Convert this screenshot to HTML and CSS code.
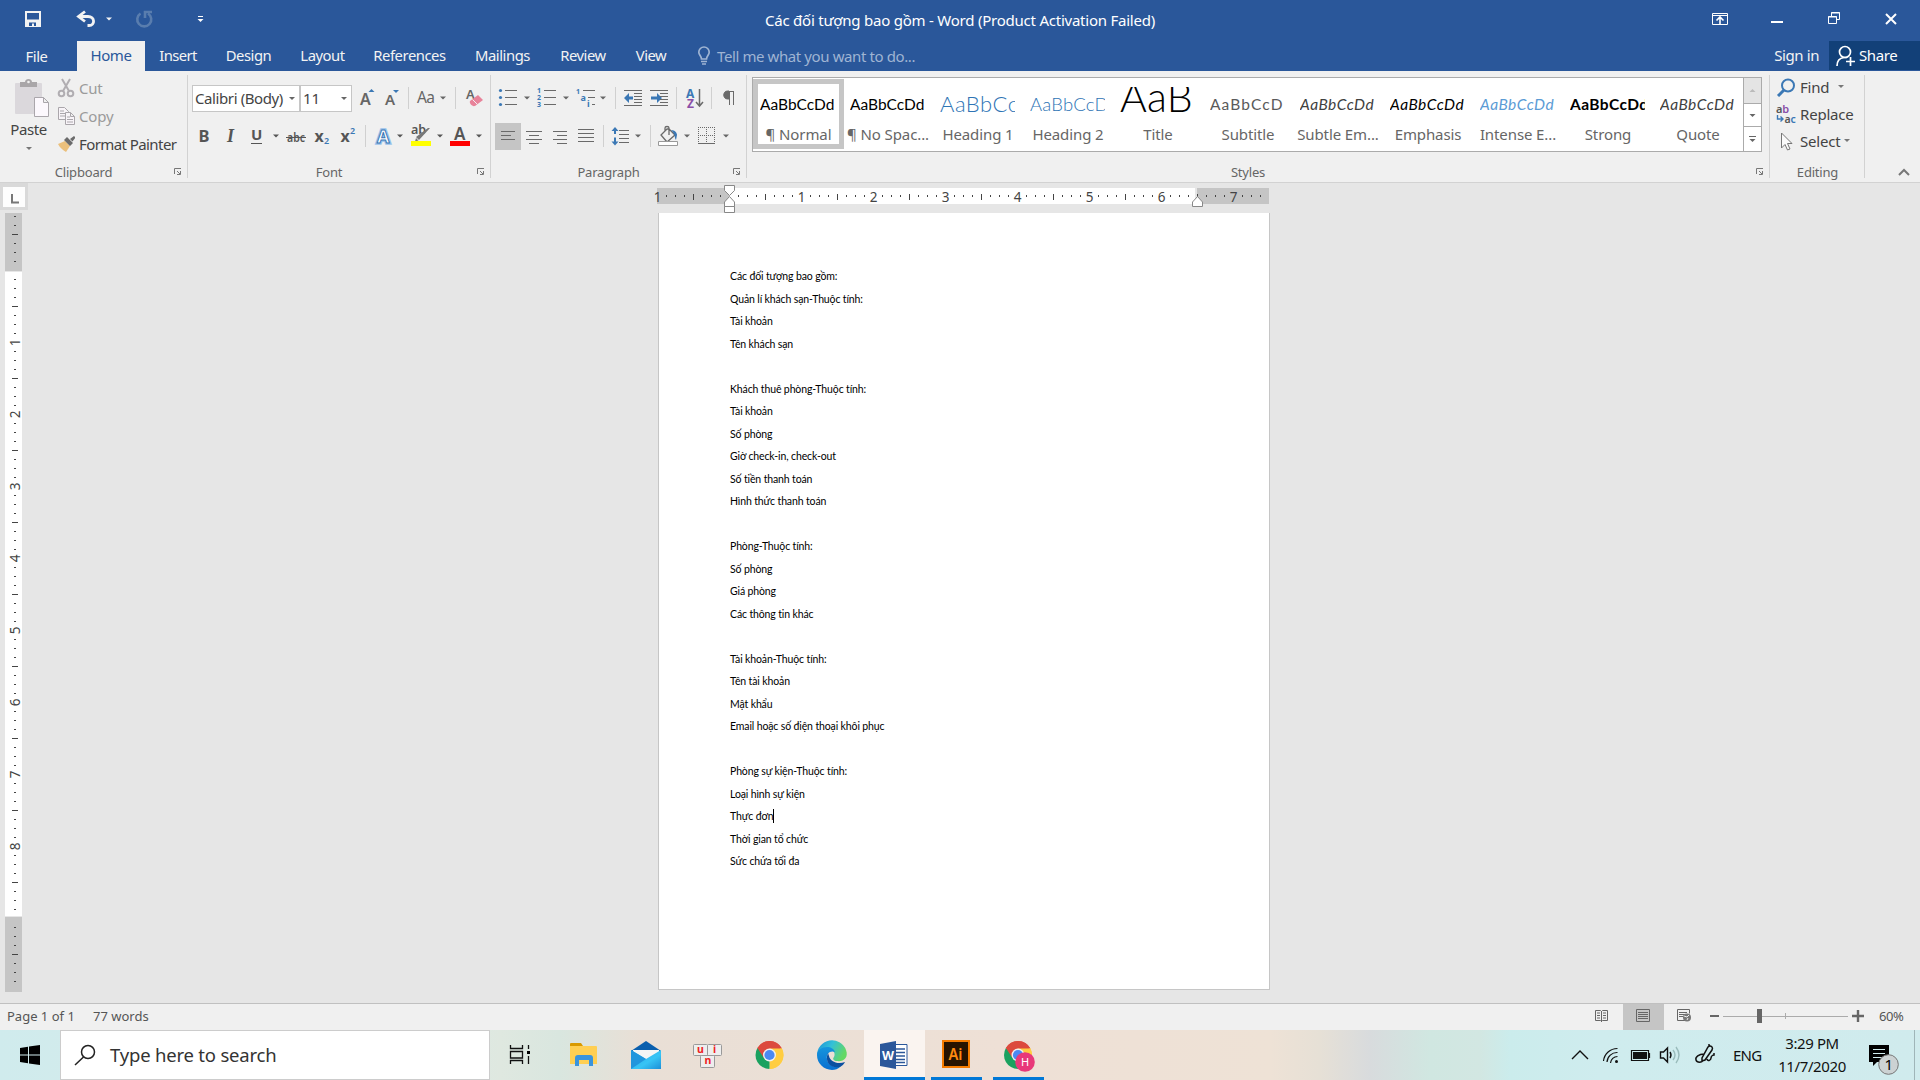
FILE: index.html
```html
<!DOCTYPE html>
<html lang="en">
<head>
<meta charset="utf-8">
<title>Các đối tượng bao gồm - Word</title>
<link rel="stylesheet" href="styles.css">
</head>
<body>
<svg class="defs" width="0" height="0" aria-hidden="true">
  <defs>
    <path id="caret" d="M0 0h6l-3 3z"/>
    <g id="launcher" fill="none" stroke="#777"><path d="M.5 6V.5H7"/><path d="M3 3l3 3M6.5 3v3.5H3"/></g>
    <pattern id="hticks" x="729" y="188" width="72" height="16" patternUnits="userSpaceOnUse">
      <path d="M9 7h1v2h-1zM18 7h1v2h-1zM27 7h1v2h-1zM36 6h1v6h-1zM45 7h1v2h-1zM54 7h1v2h-1zM63 7h1v2h-1z" fill="#444"/>
    </pattern>
    <pattern id="vticks" x="5" y="270" width="17" height="72" patternUnits="userSpaceOnUse">
      <path d="M9 9h2v1h-2zM9 18h2v1h-2zM9 27h2v1h-2zM7 36h6v1h-6zM9 45h2v1h-2zM9 54h2v1h-2zM9 63h2v1h-2z" fill="#444"/>
    </pattern>
    <g id="chrome">
      <path d="M0 0L-12.1-7A14 14 0 0 1 12.1-7z" fill="#dc4a3e"/>
      <path d="M0 0L12.1-7A14 14 0 0 1 0 14z" fill="#ffcd41"/>
      <path d="M0 0L0 14A14 14 0 0 1-12.1-7z" fill="#1aa15f"/>
      <path d="M0-6.5H12.4A14 14 0 0 0-12.1-7L-5.6 3z" fill="#dc4a3e"/>
      <path d="M5.6 3.2L0 14A14 14 0 0 0 12.4-6.5H0z" fill="#ffcd41"/>
      <circle r="6.5" fill="#f1f1f1"/><circle r="5.1" fill="#4a89f3"/>
    </g>
    <linearGradient id="edgeTop" x1="0" y1="0" x2="1" y2=".4"><stop offset="0" stop-color="#1a8fd8"/><stop offset=".5" stop-color="#33c0d8"/><stop offset="1" stop-color="#64d864"/></linearGradient>
    <linearGradient id="edgeBody" x1="0" y1="0" x2="0" y2="1"><stop offset="0" stop-color="#1595dd"/><stop offset="1" stop-color="#0a6fd0"/></linearGradient>
    <linearGradient id="mailBody" x1="0" y1="0" x2="1" y2="1"><stop offset="0" stop-color="#2aa8ea"/><stop offset=".6" stop-color="#37c4f5"/><stop offset="1" stop-color="#1c8fd8"/></linearGradient>
  </defs>
</svg>

<header class="titlebar">
  <svg class="quick" viewBox="0 0 300 41" width="300" height="41">
    <path d="M26 12h14v14h-14zM26 20.500h14" fill="none" stroke="#f3f3f3" stroke-width="2"/><path d="M26 20h14v6H26z" fill="#f3f3f3"/><path d="M29 22.500h7V26h-2v-2.500h-2V26h-3z" fill="#2a579a"/>
    <path d="M85 11.500l-6.500 5 6.500 5M79 16.500h9c7 0 7.500 9 1 9h-1.500" fill="none" stroke="#f3f3f3" stroke-width="2.800"/>
    <use href="#caret" x="106" y="17.500" fill="#f3f3f3"/>
    <path d="M140.500 13.500a7 7 0 1 0 7.500 0M145 18v-6h7" fill="none" stroke="#597dae" stroke-width="2.600"/>
    <path d="M198 16h5v1h-5z" fill="#fff"/><path d="M197.500 19h6l-3 3z" fill="#fff"/>
  </svg>
  <h1 class="doc-title">Các đối tượng bao gồm - Word (Product Activation Failed)</h1>
  <svg class="winctl" viewBox="1700 0 220 41" width="220" height="41" fill="none" stroke="#fff">
    <path d="M1712.500 13.500h15v11h-15zM1712.500 15.500h15"/><path d="M1720 24v-6M1716.500 20.500l3.500-3.500 3.500 3.500" stroke-width="1.600"/>
    <path d="M1771 22h12" stroke-width="2"/>
    <path d="M1828.500 16.500h8v7h-8zM1828 17h9M1831.500 16v-3.500h8v7H1837M1831 13h9"/>
    <path d="M1886 14l10 10M1896 14l-10 10" stroke-width="2"/>
  </svg>
</header>

<nav class="tabs">
  <span class="tab file">File</span><span class="tab active">Home</span><span class="tab insert">Insert</span><span class="tab design">Design</span><span class="tab layout">Layout</span><span class="tab references">References</span><span class="tab mailings">Mailings</span><span class="tab review">Review</span><span class="tab view">View</span>
  <span class="tell"><svg viewBox="697 46 14 20" width="14" height="20" fill="none" stroke="#9fb4d3" stroke-width="1.700"><path d="M701.500 59c0-3-2.700-4-2.700-6.800a5.200 5.200 0 0 1 10.400 0c0 2.800-2.700 3.800-2.700 6.800z"/><path d="M701 61.500h6M702 64h4"/></svg>Tell me what you want to do...</span>
  <span class="signin">Sign in</span>
  <span class="share"><svg viewBox="1836 44 20 24" width="20" height="24" fill="none" stroke="#fff" stroke-width="1.700"><circle cx="1845" cy="52" r="5.500"/><path d="M1837 66c0-5 3-8 7-8.500h3"/><path d="M1850.500 57v9M1846 61.500h9"/></svg>Share</span>
</nav>

<section class="ribbon">
  <div class="group clipboard">
    <div class="body">
      <div class="paste">
        <svg viewBox="10 76 42 44" width="42" height="44"><rect x="15" y="83" width="27" height="31" rx="1" fill="#dbd8dc"/><path d="M20 87v-5h5c0-4 7-4 7 0h5v5z" fill="#a9a6a8"/><circle cx="28.500" cy="82" r="1.300" fill="#f0f0f0"/><path d="M34.500 97.500h9l5 5v14h-14zM43.500 97.500v5h5" fill="#fcf8fd" stroke="#aaa6ab"/></svg>
        <span>Paste</span>
        <svg viewBox="0 0 6 3" width="6" height="3"><use href="#caret" fill="#777"/></svg>
      </div>
      <div class="clips">
        <div class="dim"><svg viewBox="57 78 18 20" width="18" height="20" fill="none" stroke="#b1aeb2" stroke-width="2"><circle cx="61.500" cy="93.500" r="2.800"/><circle cx="70.500" cy="93.500" r="2.800"/><path d="M63 91l7-12M69 91l-7-12"/></svg>Cut</div>
        <div class="dim"><svg viewBox="57 106 18 20" width="18" height="20" fill="#f8f4f8" stroke="#aaa6ab"><path d="M58.500 107.500h6l4 4v8h-10zM60 111h4M60 113.500h5M60 116h5"/><path d="M65.500 112.500h5l4 4v8h-9zM70.500 112.500v4h4M67 117h3M67 119.500h6M67 122h6"/></svg>Copy</div>
        <div class="painter"><svg viewBox="57 135 18 18" width="18" height="18"><path d="M58 144l7-3 5 5-4 6c-3-2-6-4-8-8z" fill="#ebc07c"/><path d="M64 140l3-3 6 6-3 3zM70 139l4-3 1.500 1.500-3 4z" fill="#6b6b6b"/></svg>Format Painter</div>
      </div>
    </div>
    <footer><span>Clipboard</span><svg viewBox="0 0 8 8" width="8" height="8"><use href="#launcher"/></svg></footer>
  </div>

  <div class="group font">
    <div class="row">
      <div class="combo face"><span>Calibri (Body)</span><svg viewBox="0 0 6 3" width="6" height="3"><use href="#caret" fill="#666"/></svg></div>
      <div class="combo size"><span>11</span><svg viewBox="0 0 6 3" width="6" height="3"><use href="#caret" fill="#666"/></svg></div>
      <svg viewBox="352 82 138 34" width="138" height="34" fill="#666">
        <text class="semi" x="360" y="104.500" font-size="16">A</text><path d="M368.500 92l3-3 3 3z" fill="#3b78b5"/>
        <text class="semi" x="385" y="104.500" font-size="15">A</text><path d="M393 90h6l-3 3z" fill="#3b78b5"/>
        <path d="M408 87h1v22h-1zM455 87h1v22h-1z" fill="#d0d0d0"/>
        <text x="417" y="103" font-size="15.500" textLength="18">Aa</text><use href="#caret" x="440" y="96.500"/>
        <text class="semi" x="466" y="99" font-size="13">A</text><path d="M470 101l8-6 5 5-8 6c-3 1-6-3-5-5z" fill="#e8839a"/><path d="M472.500 99.500l5 5" stroke="#f0f0f0"/>
      </svg>
    </div>
    <div class="row">
      <svg viewBox="188 116 302 36" width="302" height="36" fill="#555">
        <text class="bold" x="198.500" y="141" font-size="16.500">B</text>
        <text class="serif-i" x="227" y="141" font-size="18">I</text>
        <text class="bold" x="251" y="139" font-size="15" textLength="11">U</text><path d="M251 142h11v1h-11z"/>
        <use href="#caret" x="273" y="133.500"/>
        <text class="semi" x="287" y="141" font-size="12.500" textLength="18" lengthAdjust="spacingAndGlyphs">abc</text><path d="M286 136h20v1h-20z"/>
        <text class="bold" x="314.500" y="141" font-size="16">x</text><text class="semi" x="324" y="143" font-size="9" fill="#3b78b5">2</text>
        <text class="bold" x="340.500" y="141" font-size="16">x</text><text class="semi" x="350" y="133" font-size="9" fill="#3b78b5">2</text>
        <path d="M365 124h1v22h-1z" fill="#d0d0d0"/>
        <text class="bold" x="377" y="142" font-size="18" fill="#fff" stroke="#9cc3ec" stroke-width="3.500" textLength="12.500">A</text><text class="bold" x="377" y="142" font-size="18" fill="#fff" stroke="#3b78b5" textLength="12.500">A</text>
        <use href="#caret" x="397" y="133.500"/>
        <text class="semi" x="411" y="133" font-size="12.500">ab</text><path d="M430 127l-11 12-3-3 12-9zM416 137l2.500 2.500-3.500 1z" fill="#777"/><path d="M411 140h20v5h-20z" fill="#ff0"/>
        <use href="#caret" x="437" y="133.500"/>
        <text class="semi" x="454" y="138.500" font-size="17" textLength="12">A</text><path d="M450 140h20v5h-20z" fill="red"/>
        <use href="#caret" x="476" y="133.500"/>
      </svg>
    </div>
    <footer><span>Font</span><svg viewBox="0 0 8 8" width="8" height="8"><use href="#launcher"/></svg></footer>
  </div>

  <div class="group paragraph">
    <div class="row">
      <svg viewBox="491 82 255 34" width="255" height="34" fill="none" stroke="#6a6a6a">
        <path d="M505 90.500h12M505 97.500h12M505 104.500h12M544 90.500h12M544 97.500h12M544 104.500h12M583 90.500h12M588 97.500h7M592 104.500h3"/>
        <g fill="#3b78b5" stroke="none"><circle cx="500.500" cy="90.500" r="1.600"/><circle cx="500.500" cy="97.500" r="1.600"/><circle cx="500.500" cy="104.500" r="1.600"/>
        <g class="bold" font-size="7"><text x="537" y="93">1</text><text x="537" y="100">2</text><text x="537" y="107">3</text><text x="576" y="94">1</text><text x="580.500" y="101" font-size="9">a</text><text x="587" y="107" font-size="9">i</text></g>
        <path d="M624 98l5-5v3.500h4v3h-4v3.500zM662 98l-5-5v3.500h-6v3h6v3.500z"/></g>
        <g fill="#666" stroke="none"><use href="#caret" x="524" y="96.500"/><use href="#caret" x="563" y="96.500"/><use href="#caret" x="600" y="96.500"/></g>
        <path d="M615.500 87v22M676.500 87v22M711.500 87v22" stroke="#d0d0d0"/>
        <path d="M624 90.500h18M634 93.500h8M634 96.500h8M634 99.500h8M634 102.500h8M624 105.500h18M650 90.500h18M660 93.500h8M660 96.500h8M660 99.500h8M660 102.500h8M650 105.500h18"/>
        <g class="bold" stroke="none" font-size="12"><text x="686" y="97.500" fill="#3b78b5">A</text><text x="687" y="107.500" fill="#8a4ea8">Z</text></g><path d="M699.500 89v16M696 102l3.500 4 3.500-4" stroke-width="1.500"/>
        <path d="M729.500 105V91.500h4V105M734 91.500h-6" /><path d="M729 91h-1.500c-5 0-5 8 0 8h1.500z" fill="#6a6a6a"/>
      </svg>
    </div>
    <div class="row">
      <svg viewBox="491 116 255 36" width="255" height="36" fill="none" stroke="#6a6a6a">
        <path d="M495 122h26v27h-26z" fill="#c5c5c5" stroke="none"/>
        <path d="M501 130.500h14M501 134.500h10M501 138.500h14M526 130.500h16M529 134.500h10M526 138.500h16M529 142.500h10M553 130.500h14M557 134.500h10M553 138.500h14M557 142.500h10M578 128.500h16M578 132.500h16M578 136.500h16M578 140.500h16"/>
        <path d="M603.500 124v22M650.500 124v22" stroke="#d0d0d0"/>
        <path d="M619 129.500h10M619 133.500h10M619 137.500h10M619 141.500h10"/>
        <path d="M615 126l3.500 4h-2.500v3h-2v-3h-2.500zM615 144.500l3.500-4h-2.500v-4h-2v4h-2.500z" fill="#3b78b5" stroke="none"/>
        <path d="M667 128l-6 6 6 7 8-7-6-6zM665 131v-4c0-2 4-2 4 0v7" stroke-width="1.300"/><path d="M671 129c4 0 6 3 6 5l-1 5c-2-3 0-5-5-10z" fill="#3b78b5" stroke="none"/><path d="M658.500 140.500h19v4h-19z" fill="#fff" stroke="#999"/>
        <path d="M698 126.500h17M698.500 126v16M714.500 126v16M706.500 126v16M698 134.500h17" stroke-dasharray="1 1"/><path d="M698 142.500h17"/>
        <g fill="#666" stroke="none"><use href="#caret" x="635" y="133.500"/><use href="#caret" x="684" y="133.500"/><use href="#caret" x="723" y="133.500"/></g>
      </svg>
    </div>
    <footer><span>Paragraph</span><svg viewBox="0 0 8 8" width="8" height="8"><use href="#launcher"/></svg></footer>
  </div>

  <div class="group styles">
    <div class="gallery">
      <div class="style picked"><b class="p">AaBbCcDd</b><span>¶ Normal</span></div>
      <div class="style"><b class="p">AaBbCcDd</b><span>¶ No Spac...</span></div>
      <div class="style"><b class="p h1">AaBbCc</b><span>Heading 1</span></div>
      <div class="style"><b class="p h2">AaBbCcD</b><span>Heading 2</span></div>
      <div class="style"><b class="p ti">AaB</b><span>Title</span></div>
      <div class="style"><b class="p su">AaBbCcD</b><span>Subtitle</span></div>
      <div class="style"><b class="p it gr">AaBbCcDd</b><span>Subtle Em...</span></div>
      <div class="style"><b class="p it">AaBbCcDd</b><span>Emphasis</span></div>
      <div class="style"><b class="p it bl">AaBbCcDd</b><span>Intense E...</span></div>
      <div class="style"><b class="p st">AaBbCcDd</b><span>Strong</span></div>
      <div class="style"><b class="p it gr">AaBbCcDd</b><span>Quote</span></div>
      <svg class="scroller" viewBox="1744 78 18 74" width="18" height="74"><path d="M1744 78h18v25h-18z" fill="#e4e4e4"/><path d="M1744.500 78v74M1744 103.500h18M1744 126.500h18" stroke="#ababab"/><path d="M1750.500 92h6l-3-3z" fill="#bbb"/><use href="#caret" x="1750.500" y="114" fill="#666"/><path d="M1750 136h7v1h-7z" fill="#666"/><use href="#caret" x="1750.500" y="139" fill="#666"/></svg>
    </div>
    <footer><span>Styles</span><svg viewBox="0 0 8 8" width="8" height="8"><use href="#launcher"/></svg></footer>
  </div>

  <div class="group editing">
    <div class="edits">
      <div><svg viewBox="1777 77 20 20" width="20" height="20" fill="none" stroke="#3b78b5"><circle cx="1789" cy="85.500" r="6" stroke-width="2"/><path d="M1785 90l-6 6" stroke-width="3"/></svg><span class="find">Find</span><svg viewBox="0 0 6 3" width="6" height="3"><use href="#caret" fill="#777"/></svg></div>
      <div><svg viewBox="1777 104 20 20" width="20" height="20"><g class="semi" font-size="11"><text x="1777" y="113" fill="#555">a<tspan fill="#8a4ea8">b</tspan></text><text x="1785.500" y="123" fill="#555" textLength="11" lengthAdjust="spacingAndGlyphs">a<tspan fill="#3b78b5">c</tspan></text></g><path d="M1778.500 115v4h5M1781.500 116.500l2.500 2.500-2.500 2.500" fill="none" stroke="#3b78b5" stroke-width="1.400"/></svg><span>Replace</span></div>
      <div><svg viewBox="1777 131 20 20" width="20" height="20"><path d="M1782.500 133v15l3.500-3.500 2.500 5.500 2.500-1-2.500-5.500h4.500z" fill="#fafafa" stroke="#777"/></svg><span class="sel">Select</span><svg viewBox="0 0 6 3" width="6" height="3"><use href="#caret" fill="#777"/></svg></div>
    </div>
    <footer><span>Editing</span></footer>
  </div>
  <div class="collapse"><svg viewBox="0 0 12 8" width="12" height="8" fill="none" stroke="#777" stroke-width="2"><path d="M1 7l5-5 5 5"/></svg></div>
</section>

<main class="workspace">
  <svg class="vruler" viewBox="0 183 30 820" width="30" height="820">
    <path d="M0 183h28v27H0z" fill="#d9d9d9"/><path d="M3 187h22v20H3z" fill="#fdfdfd"/><path d="M12 194v8.500h7" fill="none" stroke="#777" stroke-width="2"/>
    <path d="M5 213h17v58H5zM5 917h17v75H5z" fill="#c5c5c5"/><path d="M5 272h17v644H5z" fill="#fff"/>
    <path d="M5 214h17v774H5z" fill="url(#vticks)"/>
    <g class="num"><text transform="translate(19.500 342.500) rotate(-90)">1</text><text transform="translate(19.500 414.500) rotate(-90)">2</text><text transform="translate(19.500 486.500) rotate(-90)">3</text><text transform="translate(19.500 558.500) rotate(-90)">4</text><text transform="translate(19.500 630.500) rotate(-90)">5</text><text transform="translate(19.500 702.500) rotate(-90)">6</text><text transform="translate(19.500 774.500) rotate(-90)">7</text><text transform="translate(19.500 846.500) rotate(-90)">8</text></g>
  </svg>
  <div class="canvas">
    <svg class="hruler" viewBox="640 183 640 30" width="640" height="30">
      <path d="M657 188h72v16h-72zM1197 188h72v16h-72z" fill="#c5c5c5"/><path d="M729 188h466v16h-466z" fill="#fff"/>
      <path d="M660 188h606v16h-606z" fill="url(#hticks)"/><path d="M1197 194h1v6h-1z" fill="#444"/>
      <g class="num"><text x="657.500" y="201.500">1</text><text x="801.500" y="201.500">1</text><text x="873.500" y="201.500">2</text><text x="945.500" y="201.500">3</text><text x="1017.500" y="201.500">4</text><text x="1089.500" y="201.500">5</text><text x="1161.500" y="201.500">6</text><text x="1233.500" y="201.500">7</text></g>
      <g fill="#fff" stroke="#888"><path d="M724.500 185.500h10v5l-5 5-5-5zM724.500 206.500v-4.500l5-5.500 5 5.500v4.500zM724.500 206.500h10v6h-10zM1192.500 206.500v-4.500l5-5.500 5 5.500v4.500z"/></g>
    </svg>
    <article class="page">
      <p>Các đối tượng bao gồm:</p><p>Quản lí khách sạn-Thuộc tính:</p><p>Tài khoản</p><p>Tên khách sạn</p><p></p>
      <p>Khách thuê phòng-Thuộc tính:</p><p>Tài khoản</p><p>Số phòng</p><p>Giờ check-in, check-out</p><p>Số tiền thanh toán</p><p>Hình thức thanh toán</p><p></p>
      <p>Phòng-Thuộc tính:</p><p>Số phòng</p><p>Giá phòng</p><p>Các thông tin khác</p><p></p>
      <p>Tài khoản-Thuộc tính:</p><p>Tên tài khoản</p><p>Mật khẩu</p><p>Email hoặc số điện thoại khôi phục</p><p></p>
      <p>Phòng sự kiện-Thuộc tính:</p><p>Loại hình sự kiện</p><p><span class="cursor">Thực đơn</span></p><p>Thời gian tổ chức</p><p>Sức chứa tối đa</p>
    </article>
  </div>
</main>

<div class="status">
  <span class="pages">Page 1 of 1</span><span class="words">77 words</span>
  <svg viewBox="1580 1004 295 26" width="295" height="26" fill="none" stroke="#666">
    <path d="M1595.500 1010.500h5l1 1 1-1h5v10h-5l-1 1-1-1h-5zM1601.500 1011v11M1597 1013h3M1597 1015.500h3M1597 1018h3M1603 1013h3M1603 1015.500h3M1603 1018h3"/>
    <path d="M1623 1004h41v26h-41z" fill="#c5c5c5" stroke="none"/><path d="M1636.500 1009.500h13v12h-13zM1638 1012.500h10M1638 1014.500h10M1638 1016.500h10M1638 1018.500h10"/>
    <path d="M1686 1020.500h-8.500v-11h12v4M1679 1012.500h8M1679 1014.500h6M1679 1016.500h4"/><circle cx="1687" cy="1017.500" r="4" fill="#777" stroke="none"/><path d="M1684 1016l3 1 2-2M1687 1020l1-2" stroke="#eee"/>
    <path d="M1710 1016h9" stroke-width="2"/><path d="M1723 1016.500h125M1785.500 1013v6" stroke="#ababab"/><path d="M1757 1009h5v14h-5z" fill="#666" stroke="none"/><path d="M1852 1016h12M1858 1010v12" stroke-width="2.400"/>
  </svg>
  <span class="zoom">60%</span>
</div>

<footer class="taskbar">
  <div class="start"><svg viewBox="20 1045 20 20" width="20" height="20"><path d="M20 1048l8-1.200v7.700h-8zM29 1046.600l11-1.600v9.500h-11zM20 1055.500h8v7.700l-8-1.200zM29 1055.500h11v9.500l-11-1.600z"/></svg></div>
  <div class="search"><svg viewBox="74 1044 22 22" width="22" height="22" fill="none" stroke="#222" stroke-width="1.500"><circle cx="88" cy="1052" r="6.500"/><path d="M83.500 1057l-8.500 8"/></svg><span>Type here to search</span></div>
  <svg class="apps" viewBox="490 1030 570 50" width="570" height="50">
    <g fill="none" stroke="#111" stroke-width="1.300"><path d="M510.500 1045v3.500h12V1045M510.500 1064v-3.500h12v3.500M510.500 1051.500h12v6.500h-12zM528.500 1045v4M528.500 1056v8"/></g><path d="M527 1051h3v3h-3z"/>
    <path d="M570 1044q0-1 1-1h10l2 3h-13z" fill="#d99a00"/><path d="M570 1046h26q1 0 1 1v17h-27z" fill="#ffcf52"/><path d="M575 1066v-8q0-3 3-3h12q3 0 3 3v8h-4v-6h-10v6z" fill="#3a94dd"/>
    <path d="M631 1051l15-10 15 10v3h-30z" fill="#0a5fae"/><path d="M633 1050h26v8l-13 5-13-5z" fill="#f5f5f5"/><path d="M631 1050l15 9 15-9v19h-30z" fill="url(#mailBody)"/><path d="M631 1069v-19l15 9z" fill="#2196dd"/>
    <g fill="#eee" stroke="#999"><rect x="693.500" y="1044.500" width="14" height="11" rx="1"/><rect x="707.500" y="1044.500" width="14" height="11" rx="1"/><rect x="700.500" y="1055.500" width="14" height="12" rx="1"/></g><g class="bold" fill="#e22" font-size="10.500"><text x="697" y="1053">u</text><text x="713" y="1053">i</text><text x="704.500" y="1064">n</text></g>
    <use href="#chrome" transform="translate(769.500 1055)"/>
    <path d="M817 1055a15 15 0 0 1 29-5c3 8-3 12-9 11-3 0-5-2-3-4 2-4-1-8-6-8-6 0-11 4-11 8z" fill="url(#edgeTop)"/><path d="M817 1055c0-5 5-8 10-8 4 0 7 2 8 5-5-2-9 2-8 7 1 7 8 9 14 7-3 3-6 4-9 4a15 15 0 0 1-15-15z" fill="url(#edgeBody)"/><path d="M828 1053c-4 9 3 16 12 14 2-1 4-3 5-5-8 3-15-1-16-6z" fill="#0c4fa0"/>
    <path d="M864 1030h61v50h-61z" fill="#faf4f0"/><path d="M895 1044.500h12v21h-12z" fill="#fff" stroke="#2b579a"/><path d="M896 1049h9M896 1052.500h9M896 1056h9M896 1059.500h9M896 1062.500h9" stroke="#2b579a" stroke-width="1.300"/><path d="M880 1044l16-3v28l-16-3z" fill="#2b579a"/><text class="bold" x="882" y="1060" font-size="13" fill="#fff" textLength="12" lengthAdjust="spacingAndGlyphs">W</text>
    <path d="M943 1041h26v26h-26z" fill="#271400" stroke="#f47c00" stroke-width="2"/><text class="semi" x="948.500" y="1060" font-size="16" fill="#ff8a10" textLength="14" lengthAdjust="spacingAndGlyphs">Ai</text>
    <use href="#chrome" transform="translate(1018 1055)"/><circle cx="1025" cy="1062" r="9.800" fill="#e8397a"/><text x="1021" y="1066" font-size="11" fill="#fff">H</text>
    <path d="M864 1077h61v3h-61zM931 1077h51v3h-51zM993 1077h51v3h-51z" fill="#0078d7"/>
  </svg>
  <svg class="tray" viewBox="1560 1030 160 50" width="160" height="50" fill="none" stroke="#111" stroke-width="1.400">
    <path d="M1572 1059l8-8 8 8"/>
    <path d="M1603.500 1061a14 14 0 0 1 14-12.500M1607 1062a10 10 0 0 1 10.500-9.500M1610.500 1063a7 7 0 0 1 7-6.500" stroke-width="1.200"/><circle cx="1616.500" cy="1061.500" r="1.500" fill="#111" stroke="none"/>
    <path d="M1631.500 1050.500h17v10h-17zM1649.500 1053v5" stroke-width="1.200"/><path d="M1633 1052h14v7h-14z" fill="#111" stroke="none"/>
    <path d="M1660.500 1052h3l4-4v14l-4-4h-3zM1670 1052q2 3 0 6"/><path d="M1673 1050q4 5 0 10M1676 1047q6 8 0 16" stroke="#9bb"/>
    <path d="M1702 1061v-3l6-11q2-2 4 0 1 1 0 3l-7 10zM1704 1054c-5 0-9 3-8 6s6 3 7 0M1707 1059c1 3 4 1 4-1s2-3 3-3v-2M1709 1046v-2" stroke-width="1.500"/>
  </svg>
  <span class="lang">ENG</span>
  <div class="clock"><span>3:29 PM</span><span>11/7/2020</span></div>
  <svg class="notes" viewBox="1860 1030 60 50" width="60" height="50"><path d="M1869 1045h20v17h-12l-4 4v-4h-4z"/><path d="M1873 1049.500h12M1873 1053.500h12M1873 1057.500h12" stroke="#d0ebed"/><circle cx="1888.500" cy="1064.500" r="9.800" fill="#ccd2d3" stroke="#777"/><text x="1884.500" y="1070" font-size="15">1</text><path d="M1914.500 1030v50" stroke="#9fb5b8"/></svg>
</footer>
</body>
</html>
```
FILE: styles.css
```css
* { box-sizing: border-box; }
body { margin: 0; width: 1920px; height: 1080px; overflow: hidden; display: flex; flex-direction: column; background: #e6e6e6; font: 15px/20px "Noto Sans", "Open Sans", sans-serif; color: #444; }
svg { display: block; flex: none; }
.defs { position: absolute; }
.semi { font-weight: 600; }
.bold { font-weight: 700; }
.serif-i { font-family: "Liberation Serif", serif; font-style: italic; font-weight: 700; }

.titlebar { height: 41px; flex: none; display: flex; background: #2a579a; color: #fff; }
.doc-title { margin: 0 auto 0 465px; font-size: 15px; font-weight: 400; line-height: 41px; letter-spacing: -.23px; white-space: nowrap; }

.tabs { height: 30px; flex: none; display: flex; background: #2a579a; color: #f3f3f3; line-height: 29px; letter-spacing: -.4px; white-space: nowrap; }
.tab { text-align: center; font-size: 14.8px; letter-spacing: -.45px; }
.file { width: 77px; padding: 1px 4px 0 0; }
.active { width: 68px; background: #f0f0f0; color: #2a579a; font-size: 15px; letter-spacing: -.4px; }
.insert { width: 66px; letter-spacing: -.6px; } .design { width: 75px; } .layout { width: 73px; }
.references { width: 101px; } .mailings { width: 85px; } .review { width: 76px; } .view { width: 60px; }
.tell { display: flex; align-items: center; gap: 6px; margin-left: 16px; color: #9fb4d3; letter-spacing: -.4px; }
.signin { margin-left: auto; padding-right: 10px; }
.share { width: 91px; height: 29px; padding-left: 7px; display: flex; align-items: center; gap: 3px; background: #124078; color: #fff; }

.ribbon { height: 112px; flex: none; display: flex; background: #f0f0f0; border-bottom: 1px solid #d2d2d2; }
.group { position: relative; height: 108px; padding-top: 11px; display: flex; flex-direction: column; }
.group::after { content: ""; position: absolute; right: 0; top: 4px; width: 1px; height: 103px; background: #d2d2d2; }
.clipboard { width: 188px; } .font { width: 303px; } .paragraph { width: 256px; } .styles { width: 1023px; } .editing { width: 95px; }
.group footer { display: flex; align-items: center; margin-top: auto; height: 14px; padding-right: 6px; font-size: 13px; line-height: 14px; color: #666; letter-spacing: -.2px; }
.group footer span { flex: 1; padding-right: 7px; text-align: center; }
.editing footer { padding: 0; }
.editing footer span { padding: 0; }
.row { display: flex; height: 35px; }

.body { display: flex; height: 84px; margin-top: -7px; }
.paste { width: 57px; display: flex; flex-direction: column; align-items: center; letter-spacing: -.4px; }
.paste svg:first-child { margin: 1px 0 -1px 5px; }
.paste svg:last-child { margin-top: 8px; }
.clips { display: flex; flex-direction: column; margin-top: -1px; }
.clips div { display: flex; align-items: center; gap: 4px; height: 28px; white-space: nowrap; letter-spacing: -.2px; }
.clips .painter { letter-spacing: -.58px; }
.dim { color: #9b9b9b; }

.font .row:first-child { padding-left: 4px; }
.combo { display: flex; align-items: center; justify-content: space-between; height: 27px; margin-top: 3px; padding: 0 4px 0 2px; border: 1px solid #c6c6c6; background: #fff; }
.combo span { white-space: nowrap; overflow: hidden; margin-top: -2px; }
.face { width: 108px; letter-spacing: -.4px; } .size { width: 52px; }
.face span { width: 90px; }

.gallery { display: flex; height: 75px; width: 1010px; margin: -5px 0 0 5px; border: 1px solid #ababab; background: #fff; }
.style { width: 90px; height: 70px; margin-top: 1px; padding: 0 7px; overflow: hidden; text-align: center; color: #666; white-space: nowrap; }
.style span { display: block; line-height: 20px; letter-spacing: -.1px; margin: 0 -6px; }
.p { display: flex; align-items: flex-end; width: 75px; height: 35px; margin: 8px 0 2px; overflow: hidden; font: 15.5px/36px Lato, sans-serif; color: #000; }
.picked { padding: 0 2px; border: 5px solid #c6c6c6; width: 91px; margin-right: -1px; }
.picked .p { margin-top: 3px; }
.h1 { font-size: 22px; font-weight: 300; letter-spacing: .5px; color: #2e74b5; } .h2 { font-size: 18.5px; font-weight: 300; letter-spacing: .2px; color: #2e74b5; }
.ti { font-size: 41px; font-weight: 300; line-height: 50px; letter-spacing: .2px; }
.su { letter-spacing: 1.1px; color: #5a5a5a; } .it { font-style: italic; letter-spacing: .5px; } .gr { color: #404040; } .bl { color: #5b9bd5; } .st { font-weight: 700; letter-spacing: .4px; }
.scroller { margin-left: auto; }

.edits { margin: -9px 0 0 6px; }
.edits div { display: flex; align-items: center; height: 27px; letter-spacing: -.2px; }
.edits span { margin-left: 4px; }
.find { width: 38px; } .sel { width: 44px; }
.collapse { margin: 97px 0 0 33px; }

.workspace { flex: none; height: 820px; display: flex; }
.canvas { padding-left: 610px; }
.num { font-size: 13.5px; fill: #444; text-anchor: middle; }
.page { width: 612px; height: 777px; margin-left: 18px; padding: 52.4px 0 0 71px; background: #fff; border: solid #c6c6c6; border-width: 0 1px 1px; font: 10.5px/22.5px Lato, sans-serif; letter-spacing: -.13px; color: #000; }
.page p { margin: 0; height: 22.5px; white-space: nowrap; }
.cursor { border-right: 1px solid #000; padding: 1px 0; }

.status { flex: none; height: 27px; display: flex; align-items: center; background: #f0f0f0; border-top: 1px solid #c0c0c0; font-size: 13px; color: #555; }
.status span { margin-top: -2px; }
.pages { width: 86px; margin-left: 7px; } .words { width: 1487px; }
.zoom { margin-left: 4px; letter-spacing: -.4px; }

.taskbar { flex: none; height: 50px; display: flex; color: #111; background: linear-gradient(90deg, #d0ebed 0, #d8ebe8 400px, #dfe8e0 500px, #d9e6df 560px, #e9dfd6 640px, #eee0d6 1000px, #eee2d6 1270px, #e6e0d6 1320px, #d8dbdd 1370px, #d0e7e1 1430px, #d2e7e2 1480px, #cbecec 1510px, #cfecee 1600px, #d0ebed 1920px); }
.start { width: 60px; padding: 15px 20px; }
.search { width: 430px; display: flex; align-items: center; gap: 14px; padding-left: 13px; border: 1px solid #ccc; background: #fff; font-size: 18.5px; letter-spacing: -.2px; color: #333; }
.tray { margin-left: 500px; }
.lang { width: 56px; padding-left: 13px; line-height: 51px; letter-spacing: -.8px; }
.clock { width: 72px; margin-right: 12px; display: flex; flex-direction: column; align-items: center; line-height: 23px; padding-top: 2px; letter-spacing: -.4px; }
```
